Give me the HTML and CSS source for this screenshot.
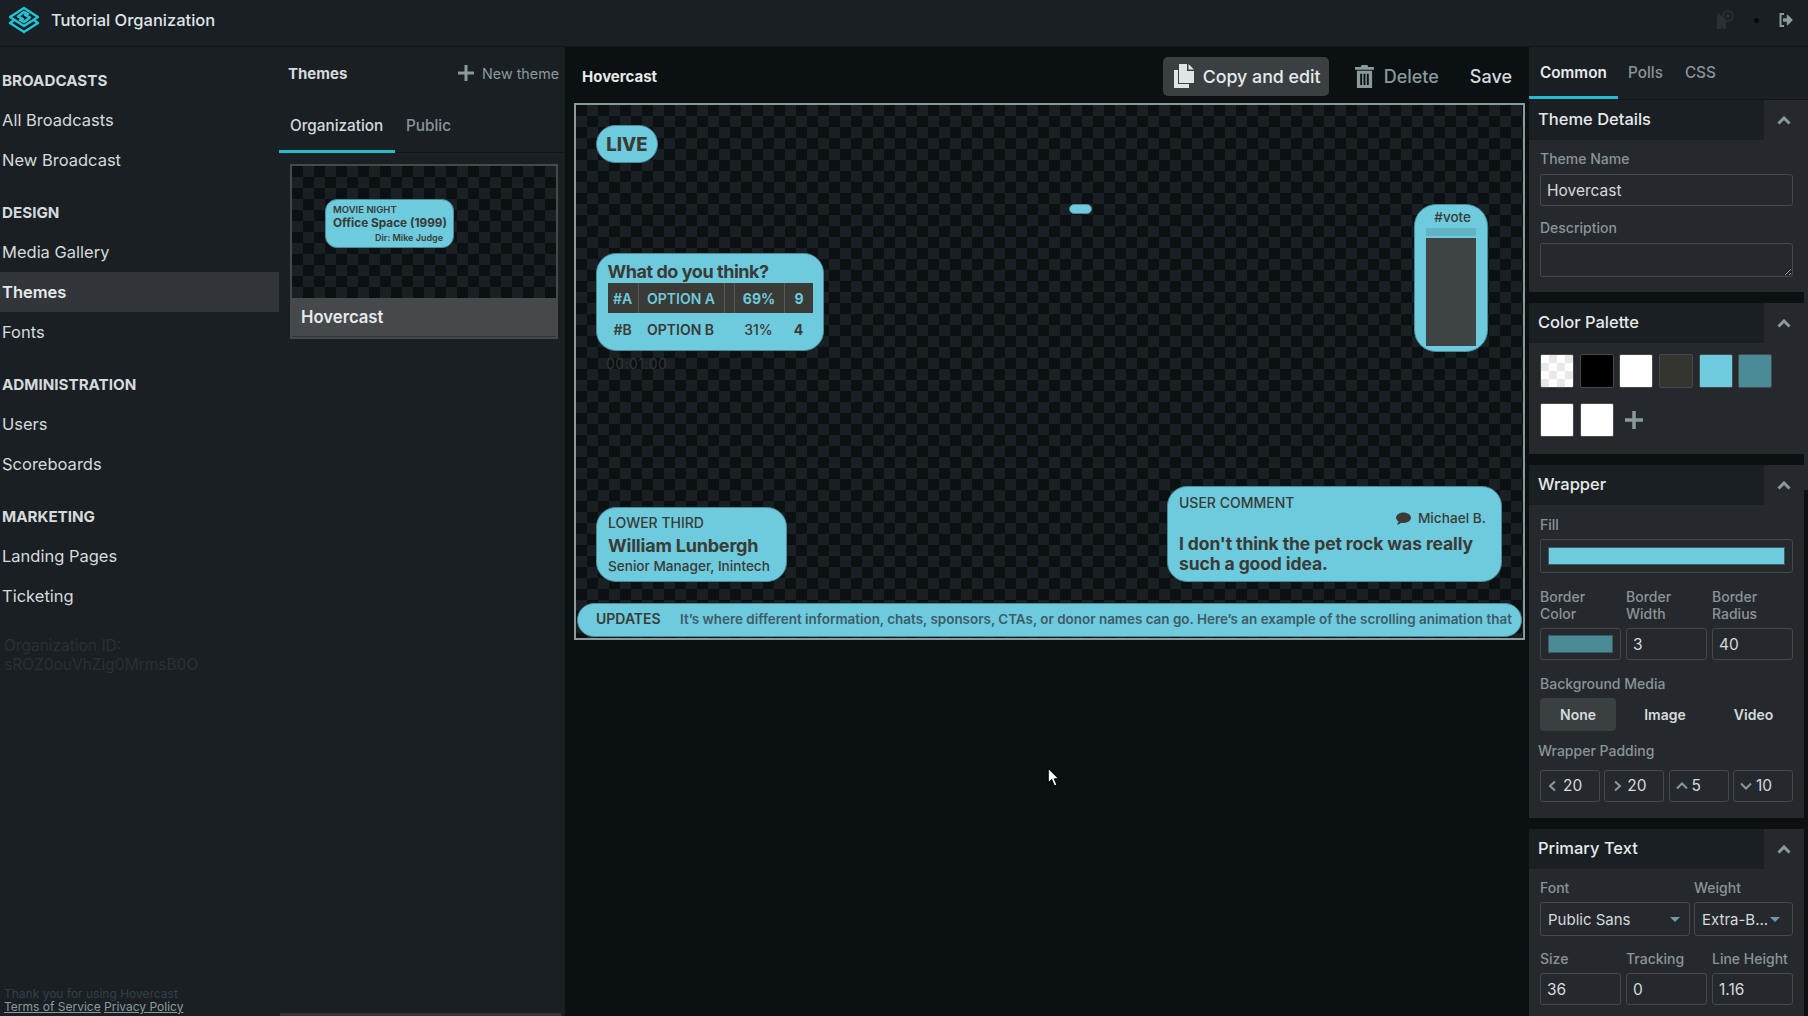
FILE: index.html
```html
<!DOCTYPE html>
<html lang="en">
<head>
<meta charset="utf-8">
<title>Hovercast Themes</title>
<link rel="stylesheet" href="styles.css">
</head>
<body>
<div class="app">
  <header class="topbar">
    <svg class="logo" viewBox="0 0 34 28" fill="none" stroke="#1fc6d9" stroke-width="2.4" stroke-linejoin="round" stroke-linecap="round"><path d="M17 2 L31 11 L17 20 L3 11 Z"/><path d="M6 15 L3 17 L17 26 L31 17 L28 15"/><path d="M21 8 L17 6 L11 10.500 L16 13 M13 14 L17 16 L23 11.500 L18 9"/></svg>
    <span class="org">Tutorial Organization</span>
    <div class="top-icons">
      <svg class="cat" viewBox="0 0 20 20" fill="#2b3034"><path d="M2 7 L4 3 L6 6 L9 7 L11 12 L11 19 L8 19 L8 15 L6 19 L2 19 Z"/><circle cx="13" cy="6" r="5" fill="none" stroke="#2b3034" stroke-width="1.600"/><circle cx="13" cy="6" r="2"/></svg>
      <span class="dot"></span>
      <svg class="signout" viewBox="0 0 16 16" fill="none" stroke="#8a9a9c" stroke-width="2"><path d="M6 2 H2.500 V14 H6"/><path d="M5 8 H10" stroke-width="3.400"/><path d="M9.500 3.500 L14 8 L9.500 12.500 Z" fill="#8a9a9c" stroke-width="1.400" stroke-linejoin="round"/></svg>
    </div>
  </header>
  <div class="body">
    <nav class="sidebar">
      <div class="nav-group">
        <div class="nav-head">BROADCASTS</div>
        <a class="nav-item">All Broadcasts</a>
        <a class="nav-item">New Broadcast</a>
      </div>
      <div class="nav-group">
        <div class="nav-head">DESIGN</div>
        <a class="nav-item">Media Gallery</a>
        <a class="nav-item active">Themes</a>
        <a class="nav-item">Fonts</a>
      </div>
      <div class="nav-group">
        <div class="nav-head">ADMINISTRATION</div>
        <a class="nav-item">Users</a>
        <a class="nav-item">Scoreboards</a>
      </div>
      <div class="nav-group">
        <div class="nav-head">MARKETING</div>
        <a class="nav-item">Landing Pages</a>
        <a class="nav-item">Ticketing</a>
      </div>
      <div class="org-id">Organization ID:<br>sROZ0ouVhZig0MrmsB0O</div>
      <footer class="foot">
        <div class="thanks">Thank you for using Hovercast</div>
        <div class="links"><a>Terms of Service</a> <a>Privacy Policy</a></div>
      </footer>
    </nav>

    <section class="themes">
      <div class="themes-head">
        <span class="themes-title">Themes</span>
        <span class="new-theme"><svg class="plus" viewBox="0 0 16 16" stroke="#8a9a9c" stroke-width="3"><path d="M8 0 V16 M0 8 H16"/></svg>New theme</span>
      </div>
      <div class="tabs themes-tabs">
        <span class="tab on">Organization</span>
        <span class="tab">Public</span>
      </div>
      <article class="card">
        <div class="thumb checker">
          <div class="thumb-pill">
            <div class="tp-1">MOVIE NIGHT</div>
            <div class="tp-2">Office Space (1999)</div>
            <div class="tp-3">Dir: Mike Judge</div>
          </div>
        </div>
        <div class="card-label">Hovercast</div>
      </article>
      <div class="next-card"></div>
    </section>

    <main class="center">
      <div class="center-head">
        <span class="center-title">Hovercast</span>
        <div class="actions">
          <button class="act act-copy"><svg class="ico-copy" viewBox="0 0 20 24" fill="#dfe4e6"><path d="M0 6 H4 V20 H15 V24 H0 Z"/><path d="M5 0 H13 V7 H20 V19 H5 Z"/><path d="M14.500 0 L20 5.500 H14.500 Z"/></svg>Copy and edit</button>
          <button class="act act-del"><svg class="ico-trash" viewBox="0 0 20 24" fill="#8a9a9c"><path d="M7 0 H13 L14 2 H20 V5 H0 V2 H6 Z"/><path fill-rule="evenodd" d="M2 6 H18 V24 H2 Z M5.500 9 V21 H7.500 V9 Z M9 9 V21 H11 V9 Z M12.500 9 V21 H14.500 V9 Z"/></svg>Delete</button>
          <button class="act act-save">Save</button>
        </div>
      </div>
      <div class="stage checker">
        <div class="live ov">LIVE</div>
        <div class="mini ov"></div>
        <div class="vote ov">
          <div class="vote-tag">#vote</div>
          <div class="vote-top"></div>
          <div class="vote-bar"></div>
        </div>
        <div class="poll ov">
          <div class="poll-q">What do you think?</div>
          <div class="poll-row lead">
            <span class="c-tag">#A</span><span class="c-name">OPTION A</span><span class="c-gap"></span><span class="c-pct">69%</span><span class="c-num">9</span>
          </div>
          <div class="poll-row">
            <span class="c-tag">#B</span><span class="c-name">OPTION B</span><span class="c-gap"></span><span class="c-pct">31%</span><span class="c-num">4</span>
          </div>
        </div>
        <div class="timer ov">00:01:00</div>
        <div class="lower ov">
          <div class="low-1">LOWER THIRD</div>
          <div class="low-2">William Lunbergh</div>
          <div class="low-3">Senior Manager, Inintech</div>
        </div>
        <div class="comment ov">
          <div class="cm-1">USER COMMENT</div>
          <div class="cm-2"><svg class="bubble" viewBox="0 0 16 14" fill="#3a3a36"><path d="M8 0.500 C12.400 0.500 16 3 16 6.200 C16 9.400 12.400 11.800 8 11.800 C7 11.800 6.200 11.700 5.400 11.500 C4 12.800 2.400 13.500 0.800 13.500 C1.800 12.500 2.500 11.300 2.600 10.300 C1 9.300 0 7.800 0 6.200 C0 3 3.600 0.500 8 0.500 Z"/></svg>Michael B.</div>
          <div class="cm-3">I don't think the pet rock was really such a good idea.</div>
        </div>
        <div class="ticker ov">
          <span class="tk-label">UPDATES</span>
          <span class="tk-text">It’s where different information, chats, sponsors, CTAs, or donor names can go. Here’s an example of the scrolling animation that</span>
        </div>
      </div>
    </main>

    <aside class="panel">
      <div class="tabs panel-tabs">
        <span class="tab on">Common</span>
        <span class="tab">Polls</span>
        <span class="tab">CSS</span>
      </div>
      <div class="scroll-thumb"></div>

      <section class="sec sec-details">
        <div class="sec-head"><span class="sec-title">Theme Details</span><span class="sec-toggle"><svg class="chev" viewBox="0 0 14 9" fill="none" stroke="#8a9a9c" stroke-width="3"><path d="M1.500 7.500 L7 2 L12.500 7.500"/></svg></span></div>
        <div class="sec-body">
          <label class="lbl">Theme Name</label>
          <input class="field" value="Hovercast">
          <label class="lbl lbl-desc">Description</label>
          <textarea class="field area"></textarea>
        </div>
      </section>

      <section class="sec sec-palette">
        <div class="sec-head"><span class="sec-title">Color Palette</span><span class="sec-toggle"><svg class="chev" viewBox="0 0 14 9" fill="none" stroke="#8a9a9c" stroke-width="3"><path d="M1.500 7.500 L7 2 L12.500 7.500"/></svg></span></div>
        <div class="swatches">
          <span class="sw sw-check"></span><span class="sw sw-black"></span><span class="sw sw-white"></span><span class="sw sw-dark"></span><span class="sw sw-teal"></span><span class="sw sw-deep"></span>
          <span class="sw sw-white"></span><span class="sw sw-white"></span>
          <svg class="sw-add" viewBox="0 0 20 20" stroke="#8a9a9c" stroke-width="3.500"><path d="M10 1 V19 M1 10 H19"/></svg>
        </div>
      </section>

      <section class="sec sec-wrapper">
        <div class="sec-head"><span class="sec-title">Wrapper</span><span class="sec-toggle"><svg class="chev" viewBox="0 0 14 9" fill="none" stroke="#8a9a9c" stroke-width="3"><path d="M1.500 7.500 L7 2 L12.500 7.500"/></svg></span></div>
        <div class="sec-body">
          <label class="lbl">Fill</label>
          <div class="field color"><span class="color-fill teal"></span></div>
          <div class="grid3 border-grid">
            <div><label class="lbl two">Border Color</label><div class="field color small"><span class="color-fill deep"></span></div></div>
            <div><label class="lbl two">Border Width</label><input class="field small" value="3"></div>
            <div><label class="lbl two">Border Radius</label><input class="field small" value="40"></div>
          </div>
          <label class="lbl lbl-media">Background Media</label>
          <div class="segment"><span class="seg on">None</span><span class="seg">Image</span><span class="seg">Video</span></div>
          <label class="lbl lbl-pad">Wrapper Padding</label>
          <div class="pads">
            <div class="field small pad"><svg class="pi" viewBox="0 0 12 12"><path d="M8 1.500 L3 6 L8 10.500"/></svg>20</div>
            <div class="field small pad"><svg class="pi" viewBox="0 0 12 12"><path d="M4 1.500 L9 6 L4 10.500"/></svg>20</div>
            <div class="field small pad"><svg class="pi" viewBox="0 0 12 12"><path d="M1 8.500 L6 3.500 L11 8.500"/></svg>5</div>
            <div class="field small pad"><svg class="pi" viewBox="0 0 12 12"><path d="M1 3.500 L6 8.500 L11 3.500"/></svg>10</div>
          </div>
        </div>
      </section>

      <section class="sec sec-primary">
        <div class="sec-head"><span class="sec-title">Primary Text</span><span class="sec-toggle"><svg class="chev" viewBox="0 0 14 9" fill="none" stroke="#8a9a9c" stroke-width="3"><path d="M1.500 7.500 L7 2 L12.500 7.500"/></svg></span></div>
        <div class="sec-body">
          <div class="font-row">
            <div><label class="lbl">Font</label><div class="field select"><span>Public Sans</span><i class="caret"></i></div></div>
            <div><label class="lbl">Weight</label><div class="field select weight"><span>Extra-B...</span><i class="caret"></i></div></div>
          </div>
          <div class="grid3 size-grid">
            <div><label class="lbl">Size</label><input class="field small" value="36"></div>
            <div><label class="lbl">Tracking</label><input class="field small" value="0"></div>
            <div><label class="lbl">Line Height</label><input class="field small" value="1.16"></div>
          </div>
        </div>
      </section>
    </aside>
  </div>
  <svg class="cursor" viewBox="0 0 12 19"><path d="M1 1 V15 L4.300 12 L6.800 18 L9.200 17 L6.800 11.300 L11 11 Z" fill="#fff" stroke="#000" stroke-width="1"/></svg>
</div>
</body>
</html>
```

FILE: styles.css
```css
* { box-sizing: border-box; }
html, body { margin: 0; height: 100%; overflow: hidden; }
body { background: #0b1013; color: #d5dadc; font-family: Inter, "Liberation Sans", sans-serif; }
.app { position: relative; width: 1808px; height: 1016px; display: flex; flex-direction: column; overflow: hidden; }

.topbar { height: 47px; flex: none; display: flex; align-items: center; background: #1a1f23; border-bottom: 1px solid #11161a; padding: 0 0 6px 7px; }
.logo { width: 34px; height: 28px; flex: none; }
.org { margin-left: 10px; font-size: 16.500px; font-weight: 500; color: #dfe4e6; }
.top-icons { margin-left: auto; display: flex; align-items: center; padding-right: 14px; }
.cat { width: 20px; height: 20px; }
.dot { width: 5px; height: 5px; border-radius: 50%; background: #060a0c; margin: 0 19px 0 19.500px; }
.signout { width: 16px; height: 16px; }

.body { flex: 1; display: flex; min-height: 0; }

.sidebar { width: 279px; flex: none; background: #1a1f23; padding-top: 13px; display: flex; flex-direction: column; }
.nav-group { margin-bottom: 12px; }
.nav-head { height: 40px; line-height: 42px; padding-left: 2px; font-size: 15.200px; font-weight: 700; color: #d5dadc; }
.nav-item { display: block; height: 40px; line-height: 40px; padding-left: 2px; font-size: 16.500px; color: #d5dadc; }
.nav-item.active { background: #32363a; font-weight: 600; color: #e6eaeb; }
.org-id { margin-top: 8px; padding-left: 4px; font-size: 15.500px; line-height: 19px; color: #2b3034; }
.foot { margin-top: auto; padding: 0 0 3px 4px; font-size: 12px; line-height: 13px; }
.thanks { color: #344047; }
.links { color: #8a9a9c; }
.links a { text-decoration: underline; }

.themes { width: 286px; flex: none; background: #1a1f23; position: relative; }
.themes-head { height: 52px; display: flex; align-items: center; justify-content: space-between; padding: 0 6px 0 9px; }
.themes-title { font-size: 15px; font-weight: 700; color: #d5dadc; }
.new-theme { display: flex; align-items: center; font-size: 14.300px; color: #8a9a9c; }
.plus { width: 16px; height: 16px; margin-right: 8px; }
.tabs { display: flex; }
.tab { font-size: 15.300px; font-weight: 500; color: #8a9498; padding: 0 11px; }
.tab.on { color: #d5dadc; border-bottom: 3px solid #24bccd; }
.themes-tabs { height: 54px; border-bottom: 1px solid #11161a; }
.themes-tabs .tab { line-height: 54px; height: 54px; }
.themes-tabs .tab.on { width: 116px; }
.card { margin: 11px 7px 0 11px; border: 2px solid #45494c; background: #45494c; }
.thumb { height: 132px; position: relative; }
.checker { background: conic-gradient(#1a1f23 25%, #0b1013 0 50%, #1a1f23 0 75%, #0b1013 0) 0 0 / 22px 22px; }
.thumb-pill { position: absolute; left: 33px; top: 33px; width: 129px; height: 49px; border-radius: 12px; background: #6ecadd; border: 1px solid #4b8a97; padding: 4px 7px; color: #3a3a36; }
.tp-1 { font-size: 9.500px; font-weight: 600; line-height: 11px; }
.tp-2 { font-size: 11.800px; font-weight: 700; line-height: 17px; white-space: nowrap; }
.tp-3 { font-size: 9px; font-weight: 600; line-height: 11px; text-align: right; padding-right: 3px; }
.card-label { height: 39px; padding-left: 9px; font-size: 16.700px; font-weight: 600; line-height: 38px; color: #e6eaeb; border-bottom: 1px solid #32363a; }
.next-card { position: absolute; left: 1px; right: 4px; bottom: 0; height: 3px; background: #32363a; }

.center { width: 964px; flex: none; background: #0b1013; }
.center-head { height: 56px; display: flex; align-items: center; justify-content: space-between; padding: 2px 17px 0 17px; }
.center-title { font-size: 15px; font-weight: 700; color: #e6eaeb; }
.actions { display: flex; align-items: center; }
.act { border: 0; background: none; font: inherit; font-size: 18px; font-weight: 500; display: flex; align-items: center; height: 39px; border-radius: 5px; padding: 0; }
.act-copy { background: #3a4042; color: #e6eaeb; width: 166px; padding-left: 11px; font-size: 17.800px; }
.act-del { color: #8a9a9c; margin-left: 26px; }
.act-save { color: #d5dadc; margin-left: 31px; }
.ico-copy { width: 20px; height: 24px; margin-right: 9px; }
.ico-trash { width: 19px; height: 23px; margin-right: 10px; }

.stage { position: relative; width: 951px; height: 537px; margin-left: 9px; border: 2px solid #8a9a9c; overflow: hidden; color: #3a3a36; }
.ov { position: absolute; background: #6ecadd; border: 1.500px solid #4b8a97; }
.live { left: 20px; top: 20px; width: 62px; height: 38px; border-radius: 19px; font-size: 18.500px; font-weight: 800; line-height: 36px; text-align: center; }
.mini { left: 493px; top: 99px; width: 23px; height: 10px; border-radius: 5px; }
.vote { left: 838px; top: 99px; width: 74px; height: 148px; border-radius: 22px; padding: 3px 11px 0; }
.vote-tag { font-size: 13.500px; font-weight: 500; line-height: 18px; text-align: right; padding-right: 5px; }
.vote-top { height: 8px; margin-top: 2px; background: #62b3c3; }
.vote-bar { height: 108px; margin-top: 2px; background: #3e4444; }
.poll { left: 20px; top: 148px; width: 228px; height: 98px; border-radius: 20px; padding: 7px 10.500px 0; }
.poll-q { font-size: 18px; font-weight: 700; letter-spacing: -0.450px; line-height: 22px; }
.poll-row { display: flex; height: 33px; line-height: 34px; font-size: 14px; font-weight: 500; text-align: center; }
.poll-row.lead { height: 30px; line-height: 31px; background: #3a3a36; color: #6ecadd; font-weight: 700; }
.poll-row.lead span + span { border-left: 1px solid #55595a; }
.c-tag { width: 30px; flex: none; font-weight: 600; }
.c-name { width: 86px; flex: none; font-weight: 600; }
.c-gap { width: 10px; flex: none; }
.c-pct { width: 50px; flex: none; }
.c-num { width: 30px; flex: none; font-weight: 700; }
.timer { left: 30px; top: 251px; background: none; border: 0; font-size: 14px; line-height: 16px; color: #30343a; letter-spacing: 0.400px; }
.lower { left: 20px; top: 402px; width: 191px; height: 75px; border-radius: 20px; padding: 6px 11px 0; }
.low-1 { font-size: 14px; font-weight: 500; line-height: 17px; }
.low-2 { font-size: 18px; font-weight: 700; letter-spacing: -0.200px; line-height: 24px; margin-top: 3px; }
.low-3 { font-size: 13.600px; font-weight: 500; line-height: 16px; white-space: nowrap; }
.comment { left: 591px; top: 381px; width: 335px; height: 96px; border-radius: 20px; padding: 7px 11px 0; }
.cm-1 { font-size: 14px; font-weight: 500; line-height: 17px; }
.cm-2 { display: flex; justify-content: flex-end; align-items: center; font-size: 13.700px; font-weight: 500; line-height: 17px; margin-top: -1px; padding-right: 4px; }
.bubble { width: 15px; height: 13px; margin-right: 7px; }
.cm-3 { font-size: 17.500px; font-weight: 700; letter-spacing: -0.100px; line-height: 20px; margin-top: 7px; }
.ticker { left: 1px; top: 498px; width: 945px; height: 34px; border-radius: 17px; display: flex; align-items: center; padding: 0 0 3px 18px; white-space: nowrap; overflow: hidden; }
.tk-label { font-size: 14px; font-weight: 600; width: 84px; flex: none; }
.tk-text { font-size: 13.450px; font-weight: 600; color: #3d5c66; }

.panel { flex: 1; min-width: 0; position: relative; background: #0b1013; }
.panel-tabs { height: 53px; background: #1a1f23; border-bottom: 1px solid #11161a; margin-bottom: 0; }
.panel-tabs .tab { height: 52px; line-height: 51px; padding: 0; }
.panel-tabs .tab.on { font-weight: 600; color: #e6eaeb; width: 89px; padding-left: 11px; }
.panel-tabs .tab + .tab { margin-left: 10px; }
.panel-tabs .tab + .tab + .tab { margin-left: 22px; }
.scroll-thumb { position: absolute; right: 0; top: 53px; width: 4px; height: 390px; background: #25292d; }

.sec { width: 275px; background: #25292d; margin-bottom: 11px; }
.sec-head { height: 40px; display: flex; background: #25292d; }
.sec-title { width: 235px; flex: none; background: #1a1f23; padding-left: 9px; font-size: 16.500px; font-weight: 500; line-height: 39px; color: #e6eaeb; }
.sec-toggle { flex: 1; display: flex; align-items: center; justify-content: center; }
.chev { width: 14px; height: 9px; }
.sec-body { padding: 0 11px; }
.lbl { display: block; font-size: 14px; font-weight: 500; line-height: 16px; color: #8a9498; }
.field { display: block; width: 100%; background: transparent; border: 1px solid #45494c; border-radius: 3px; color: #d5dadc; font: inherit; font-size: 15.500px; padding: 0 6px; outline: 0; }
input.field { height: 32px; }
.sec-details { height: 192px; }
.sec-details .lbl { margin-top: 11px; margin-bottom: 7px; }
.sec-details .lbl-desc { margin-top: 14px; margin-bottom: 7px; }
.area { height: 34px; resize: vertical; }
.swatches { height: 111px; padding: 11px 9px 0 11px; display: flex; flex-wrap: wrap; gap: 15px 5.700px; align-content: flex-start; }
.sw { width: 34px; height: 34px; border-radius: 2px; border: 1px solid #45494c; }
.sw-check { background: conic-gradient(#e8e8e8 25%, #fff 0 50%, #e8e8e8 0 75%, #fff 0) 0 0 / 16px 16px; }
.sw-black { background: #000; }
.sw-white { background: #fff; }
.sw-dark { background: #353530; }
.sw-teal { background: #6ecadd; }
.sw-deep { background: #4b8a97; }
.sw-add { width: 20px; height: 20px; margin: 7px 0 0 5px; }
.sec-wrapper { height: 353px; }
.sec-wrapper > .sec-body > .lbl:first-child { margin-top: 12px; margin-bottom: 6px; }
.color { height: 34px; padding: 7px; display: flex; }
.color.small { height: 32px; padding: 6px 7px; }
.color-fill { flex: 1; display: block; border: 1px solid #3f5a60; }
.teal { background: #6ecadd; }
.deep { background: #4b8a97; }
.grid3 { display: grid; grid-template-columns: repeat(3, 80.500px); gap: 5.500px; }
.border-grid { margin-top: 15px; }
.two { height: 34px; line-height: 17px; margin-bottom: 6px; width: 60px; }
.lbl-media { margin-top: 16px; }
.segment { display: flex; margin-top: 6px; height: 33px; }
.seg { flex: 1; text-align: center; font-size: 14px; font-weight: 600; line-height: 33px; color: #d5dadc; border-radius: 4px; }
.seg.on { background: #3a4042; flex: 0 0 76px; }
.seg:nth-child(2) { flex: 0 0 98px; }
.lbl-pad { margin: 12px 0 0 -2px; }
.pads { display: grid; grid-template-columns: repeat(4, 60px); gap: 4.300px; margin-top: 11px; }
.pad { height: 32px; line-height: 30px; padding: 0 0 0 6px; display: flex; align-items: center; }
.pi { width: 12px; height: 12px; margin-right: 4px; fill: none; stroke: #8a9a9c; stroke-width: 2; flex: none; }
.sec-primary { margin-bottom: 0; height: 190px; }
.font-row { display: flex; gap: 4px; padding-top: 11px; }
.font-row > div:first-child { width: 150px; }
.font-row > div:last-child { width: 99px; }
.font-row .lbl { margin-bottom: 6px; }
.select { height: 34px; display: flex; align-items: center; justify-content: space-between; padding: 0 9px 0 7px; font-size: 15px; }
.weight { padding-right: 12px; }
.caret { width: 0; height: 0; border-left: 5px solid transparent; border-right: 5px solid transparent; border-top: 5px solid #6d9aa8; }
.size-grid { margin-top: 15px; }
.size-grid .lbl { margin-bottom: 6px; white-space: nowrap; }

.cursor { position: absolute; left: 1047px; top: 767px; width: 13px; height: 20px; }
```
